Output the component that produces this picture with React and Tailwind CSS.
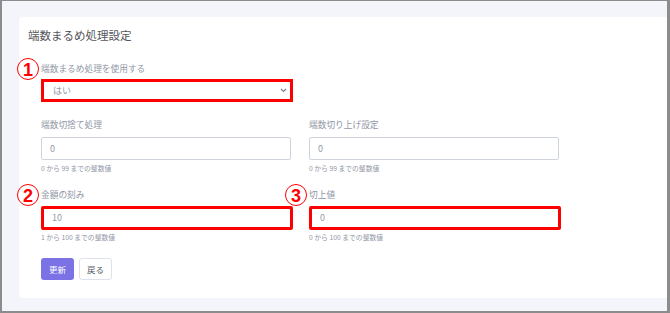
const FONT = { fontFamily: '"Noto Sans CJK JP", "Noto Sans", sans-serif' };

function Badge({ n, className }) {
  return (
    <span
      className={`absolute flex h-[22px] w-[22px] items-center justify-center rounded-full border-[1.5px] border-[#ff0000] bg-white pt-[1px] text-[18px] font-bold leading-none text-[#ff0000] ${className}`}
      style={{ fontFamily: '"Liberation Sans", sans-serif' }}
    >
      {n}
    </span>
  );
}

function Field({ label, value, help, red, badge }) {
  return (
    <div className="relative">
      {badge}
      <div className="text-[8.7px] leading-[12px] text-[#9096a6]">{label}</div>
      <div
        className={`flex items-center rounded-[2px] bg-white pl-[8px] text-[9px] text-[#9499a8] ${
          red
            ? 'mt-[5px] h-[24px] w-[252px] border-[3px] border-[#ff0000]'
            : 'mt-[6px] h-[23px] w-[250px] border border-[#cfd3dc]'
        }`}
      >
        {value}
      </div>
      <div className={`${red ? 'mt-[2px]' : 'mt-[3px]'} text-[6.8px] leading-[10px] text-[#9096a6]`}>{help}</div>
    </div>
  );
}

export default function App() {
  return (
    <div
      className="h-[313px] w-[670px] overflow-hidden border-b-2 border-l-2 border-r-[3px] border-t border-[#8c8c8c] bg-[#f4f5fa] pl-[17px] pt-[16px]"
      style={FONT}
    >
      <div className="h-[281px] rounded-l-[4px] bg-white pt-[10px]">
        <div className="pl-[9px] text-[11.5px] leading-[16px] text-[#55565c]">端数まるめ処理設定</div>

        <div className="pl-[22px]">
          <div className="relative mt-[20px]">
            <Badge n="1" className="left-[-24px] top-[-5px]" />
            <div className="text-[8.7px] leading-[12px] text-[#9096a6]">端数まるめ処理を使用する</div>
            <div className="mt-[4px] flex h-[23px] w-[252px] items-center justify-between border-[3px] border-[#ff0000] bg-white pl-[9px] pr-[3px] text-[9px] text-[#9499a8]">
              <span>はい</span>
              <svg width="7" height="5" viewBox="0 0 7 5" fill="none">
                <path d="M1 1l2.5 2.5L6 1" stroke="#7b8194" strokeWidth="1.2" />
              </svg>
            </div>
          </div>

          <div className="mt-[17px] grid grid-cols-[250px_250px] gap-x-[18px]">
            <Field label="端数切捨て処理" value="0" help="0 から 99 までの整数値" />
            <Field label="端数切り上げ設定" value="0" help="0 から 99 までの整数値" />
          </div>

          <div className="mt-[16px] grid grid-cols-[250px_250px] gap-x-[18px]">
            <Field
              label="金額の刻み"
              value="10"
              help="1 から 100 までの整数値"
              red
              badge={<Badge n="2" className="left-[-24px] top-[-5px]" />}
            />
            <Field
              label="切上値"
              value="0"
              help="0 から 100 までの整数値"
              red
              badge={<Badge n="3" className="left-[-24px] top-[-5px]" />}
            />
          </div>

          <div className="mt-[16px] flex gap-[5px]">
            <button className="h-[22px] w-[33px] rounded-[3px] bg-[#7b72e5] text-[8.5px] text-white">更新</button>
            <button className="h-[22px] w-[33px] rounded-[3px] border border-[#dde2ec] bg-white text-[8.5px] text-[#555a66]">戻る</button>
          </div>
        </div>
      </div>
    </div>
  );
}
